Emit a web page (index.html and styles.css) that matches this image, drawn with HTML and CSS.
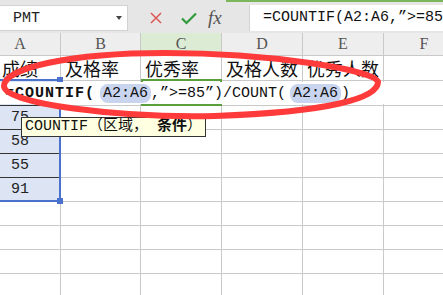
FILE: index.html
```html
<!DOCTYPE html>
<html lang="zh-CN">
<head>
    <meta charset="UTF-8">
    <meta name="viewport" content="width=device-width, initial-scale=1.0">
    <title>COUNTIF</title>
    <link rel="stylesheet" href="styles.css">
</head>
<body>
<div class="app">

    <!-- barra de fórmulas -->
    <div class="toolbar">
        <div class="toolbar-left">
            <div class="namebox">
                <span>PMT</span>
                <span class="caret"></span>
            </div>
            <div class="tool-icons">
                <svg class="icon-x" width="12" height="12" viewBox="0 0 12 12">
                    <path d="M1 1 L11 11 M11 1 L1 11" stroke="#dc5a5a" stroke-width="1.6" fill="none"/>
                </svg>
                <svg class="icon-ok" width="16" height="13" viewBox="0 0 16 13">
                    <path d="M1 6.5 L5.5 11 L15 1.5" stroke="#2f9a3c" stroke-width="2.2" fill="none"/>
                </svg>
                <span class="fx">fx</span>
            </div>
        </div>
        <div class="formula-wrap">
            <div class="formula-box">=COUNTIF(A2:A6,”&gt;=85”)/COUNT(A2:A6)</div>
        </div>
    </div>

    <!-- planilha: células e camada de seleção empilhadas -->
    <div class="sheet">
        <div class="grid cells">
            <div class="cell head">A</div>
            <div class="cell head">B</div>
            <div class="cell head on">C</div>
            <div class="cell head">D</div>
            <div class="cell head">E</div>
            <div class="cell head">F</div>

            <div class="cell label center">成绩</div>
            <div class="cell label">及格率</div>
            <div class="cell label">优秀率</div>
            <div class="cell label">及格人数</div>
            <div class="cell label">优秀人数</div>
            <div class="cell"></div>

            <div class="cell num"></div>
            <div class="cell"></div>
            <div class="cell"></div>
            <div class="cell"></div>
            <div class="cell"></div>
            <div class="cell"></div>

            <div class="cell num">75</div>
            <div class="cell"></div>
            <div class="cell"></div>
            <div class="cell"></div>
            <div class="cell"></div>
            <div class="cell"></div>

            <div class="cell num">58</div>
            <div class="cell"></div>
            <div class="cell"></div>
            <div class="cell"></div>
            <div class="cell"></div>
            <div class="cell"></div>

            <div class="cell num">55</div>
            <div class="cell"></div>
            <div class="cell"></div>
            <div class="cell"></div>
            <div class="cell"></div>
            <div class="cell"></div>

            <div class="cell num last">91</div>
            <div class="cell"></div>
            <div class="cell"></div>
            <div class="cell"></div>
            <div class="cell"></div>
            <div class="cell"></div>

            <div class="cell"></div>
            <div class="cell"></div>
            <div class="cell"></div>
            <div class="cell"></div>
            <div class="cell"></div>
            <div class="cell"></div>

            <div class="cell"></div>
            <div class="cell"></div>
            <div class="cell"></div>
            <div class="cell"></div>
            <div class="cell"></div>
            <div class="cell"></div>

            <div class="cell"></div>
            <div class="cell"></div>
            <div class="cell"></div>
            <div class="cell"></div>
            <div class="cell"></div>
            <div class="cell"></div>

            <div class="cell"></div>
            <div class="cell"></div>
            <div class="cell"></div>
            <div class="cell"></div>
            <div class="cell"></div>
            <div class="cell"></div>
        </div>

        <div class="grid layer">
            <!-- referência A2:A6 -->
            <div class="ref-box"></div>
            <!-- célula ativa C2 -->
            <div class="active-cell"></div>
            <!-- edição dentro da célula -->
            <div class="editor"><span class="fn">=COUNTIF(</span><span class="ref">A2:A6</span>,”&gt;=85”)/COUNT(<span class="ref ref2">A2:A6</span>)</div>
        </div>
    </div>

    <div class="tip">COUNTIF（区域， <b>条件</b>）</div>

    <svg class="mark" width="443" height="295" viewBox="0 0 443 295">
        <path d="M378 82 C378 98 330 112 215 116 C120 118 4 104 4 86 C4 68 70 53 165 53 C270 53 375 70 378 82 Z"
              stroke="#ff3a3a" stroke-width="6" fill="none"/>
    </svg>
</div>
</body>
</html>
```

FILE: styles.css
```css
html, body {
    margin: 0;
    padding: 0;
    background: #ffffff;
    overflow: hidden;
}

.app {
    position: relative;
    width: 443px;
    height: 295px;
    overflow: hidden;
    font-family: "Liberation Mono", "Noto Sans CJK SC", monospace;
}

/* Barra superior */
.toolbar {
    display: flex;
    height: 33px;
    background-color: #e6e6e6;
}

.toolbar-left {
    display: flex;
    width: 226px;
    padding-top: 5px;
    box-sizing: border-box;
}

.namebox {
    display: flex;
    align-items: center;
    justify-content: space-between;
    width: 128px;
    height: 26px;
    box-sizing: border-box;
    padding: 0 5px 0 13px;
    background-color: #ffffff;
    border: 1px solid #d2d2d2;
    border-left: none;
    font-size: 15px;
    color: #222;
}

.caret {
    width: 0;
    height: 0;
    border-left: 3px solid transparent;
    border-right: 3px solid transparent;
    border-top: 4px solid #444;
}

.tool-icons {
    display: flex;
    align-items: center;
    height: 26px;
}

.icon-x {
    margin-left: 22px;
}

.icon-ok {
    margin-left: 19px;
}

.fx {
    margin-left: 11px;
    font-family: "Liberation Serif", serif;
    font-style: italic;
    font-size: 19px;
    color: #555;
}

.formula-wrap {
    flex: 1;
    min-width: 0;
    border-top: 2px solid #7cb65a;
    padding: 3px 0 2px 23px;
}

.formula-box {
    height: 26px;
    line-height: 26px;
    padding-left: 13px;
    background-color: #ffffff;
    border-left: 1px solid #d2d2d2;
    font-size: 15px;
    color: #111;
    white-space: nowrap;
    overflow: hidden;
}

/* Planilha */
.sheet {
    display: grid;
    margin-left: -20px;
}

.grid {
    grid-area: 1 / 1;
    display: grid;
    grid-template-columns: 81px 80px 81px 81px 81px 81px;
    grid-template-rows: 23px 25px 25px repeat(8, 24px);
}

.layer {
    z-index: 1;
}

.cell {
    box-sizing: border-box;
    border-right: 1px solid #c9c9c9;
    border-bottom: 1px solid #c9c9c9;
    white-space: nowrap;
    overflow: hidden;
}

.head {
    background-color: #eeeeee;
    text-align: center;
    font-family: "Liberation Serif", serif;
    font-size: 16px;
    line-height: 22px;
    color: #555;
}

.head.on {
    background-color: #dcebd4;
}

.label {
    font-family: "Noto Sans CJK SC", sans-serif;
    font-size: 18px;
    line-height: 24px;
    padding-left: 4px;
    color: #111;
}

.center {
    text-align: center;
    padding-left: 0;
}

.num {
    background-color: #dde4f4;
    border-bottom-color: #333;
    text-align: center;
    font-size: 15px;
    line-height: 23px;
    color: #222;
}

.num.last {
    border-bottom-color: #c9c9c9;
}

.ref-box {
    grid-column: 1;
    grid-row: 3 / 8;
    position: relative;
    margin-top: -2px;
    border: 2px solid #4a72cc;
}

.ref-box::before,
.ref-box::after {
    content: "";
    position: absolute;
    right: -4px;
    width: 6px;
    height: 6px;
    background-color: #4a72cc;
}

.ref-box::before {
    top: -4px;
}

.ref-box::after {
    bottom: -4px;
}

.active-cell {
    grid-column: 3;
    grid-row: 3;
    margin-top: -2px;
    border: 2px solid #5b9f3d;
}

.editor {
    grid-column: 1 / 6;
    grid-row: 3;
    display: flex;
    align-items: center;
    margin: 1px 0 2px;
    padding-left: 25px;
    background-color: #ffffff;
    font-size: 15px;
    color: #111;
    white-space: pre;
    z-index: 2;
}

.fn {
    font-weight: bold;
    letter-spacing: 1px;
}

.ref {
    background-color: #c9d5ef;
    border-radius: 8px;
    padding: 0 3px;
    margin-left: 5px;
    line-height: 19px;
}

.ref2 {
    margin-left: 4px;
}

/* Dica da função */
.tip {
    position: absolute;
    left: 21px;
    top: 117px;
    height: 20px;
    box-sizing: border-box;
    padding: 0 3px;
    border: 1px solid #333;
    background-color: #ffffe1;
    font-size: 15px;
    line-height: 18px;
    color: #111;
    white-space: pre;
    z-index: 5;
}

.mark {
    position: absolute;
    left: 0;
    top: 0;
    pointer-events: none;
    z-index: 10;
}
```
